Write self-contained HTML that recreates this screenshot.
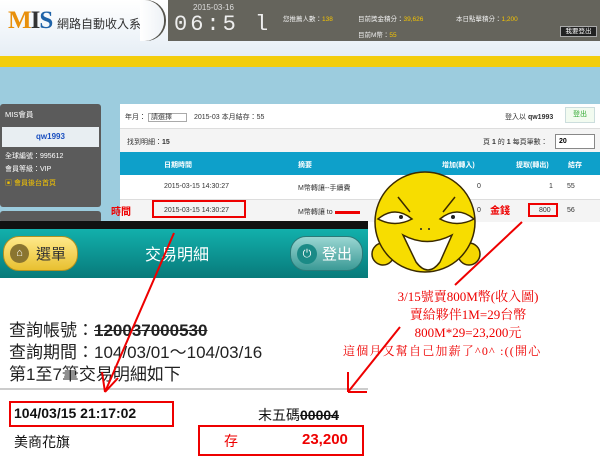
<!DOCTYPE html>
<html><head><meta charset="utf-8"><style>
*{margin:0;padding:0;box-sizing:border-box}
body{width:600px;height:459px;overflow:hidden;position:relative;background:#fff;font-family:"Liberation Sans","Noto Sans CJK TC",sans-serif}
.a{position:absolute}
.s{font-size:7px;color:#333;white-space:nowrap}
</style></head><body>
<div class="a" style="left:0;top:0;width:600px;height:56px;background:linear-gradient(#fff,#e6eef5)"></div>
<div class="a" style="left:8px;top:7px;font-family:'Liberation Serif',serif;font-size:25px;font-weight:bold;letter-spacing:-1px"><span style="color:#e8900c">M</span><span style="color:#333">I</span><span style="color:#1f63a8">S</span></div>
<div class="a" style="left:57px;top:15px;font-size:12px;color:#333;font-family:'Noto Sans CJK TC',sans-serif">網路自動收入系統</div>
<div class="a" style="left:168px;top:0;width:432px;height:41px;background:#65645c"></div>
<div class="a" style="left:140px;top:0;width:24px;height:41px;border-radius:0 20px 20px 0;background:linear-gradient(90deg,#fff,#eef2f6);box-shadow:2px 0 0 #55544d"></div>
<div class="a" style="left:193px;top:3px;font-size:8px;color:#ddd">2015-03-16</div>
<div class="a" style="left:174px;top:12px;font-size:22px;color:#eee;font-family:'Liberation Mono',monospace;letter-spacing:3px">06:5 l</div>
<div class="a" style="left:283px;top:13px;font-size:6.5px;color:#eee">您推薦人數：<span style="color:#f5c400">138</span></div>
<div class="a" style="left:358px;top:13px;font-size:6.5px;color:#eee">目前獎金積分：<span style="color:#f5c400">39,626</span></div>
<div class="a" style="left:456px;top:13px;font-size:6.5px;color:#eee">本日點擊積分：<span style="color:#f5c400">1,200</span></div>
<div class="a" style="left:358px;top:29px;font-size:6.5px;color:#eee">目前M幣：<span style="color:#f5c400">55</span></div>
<div class="a" style="left:560px;top:26px;width:37px;height:11px;background:#222;border:1px solid #aaa;color:#fff;font-size:6.5px;text-align:center;line-height:9px">我要登出</div>
<div class="a" style="left:0;top:56px;width:600px;height:11px;background:#f3cd0c"></div>
<div class="a" style="left:0;top:67px;width:600px;height:155px;background:#9cccde"></div>
<!-- sidebar -->
<div class="a" style="left:0;top:104px;width:101px;height:103px;background:#5b5b5b;border-radius:3px"></div>
<div class="a" style="left:5px;top:109px;font-size:7.5px;color:#fff">MIS會員</div>
<div class="a" style="left:2px;top:127px;width:97px;height:20px;background:#e8eef2;color:#1a4fc0;font-size:8px;font-weight:bold;text-align:center;line-height:20px">qw1993</div>
<div class="a" style="left:5px;top:151px;font-size:7px;color:#fff">全球編號：995612</div>
<div class="a" style="left:5px;top:164px;font-size:7px;color:#fff">會員等級：VIP</div>
<div class="a" style="left:5px;top:178px;font-size:7px;color:#f5c400">▣ 會員後台首頁</div>
<div class="a" style="left:0;top:211px;width:101px;height:12px;background:#5b5b5b;border-radius:3px"></div>
<!-- main -->
<div class="a" style="left:120px;top:104px;width:480px;height:118px;background:#fff"></div>
<div class="a s" style="left:125px;top:112px">年月： <span style="border:1px solid #aaa;padding:0 14px 0 2px">請選擇</span>　2015-03 本月結存：55</div>
<div class="a s" style="left:505px;top:112px">登入以 <b>qw1993</b></div>
<div class="a" style="left:565px;top:107px;width:30px;height:16px;border:1px solid #cdd;background:#f2fbf0;color:#3a3;font-size:7px;text-align:center;line-height:14px">登出</div>
<div class="a" style="left:120px;top:128px;width:480px;height:24px;background:#f4f4f4;border-top:1px solid #ddd"></div>
<div class="a s" style="left:127px;top:137px">找到明細：<b>15</b></div>
<div class="a s" style="left:483px;top:137px">頁 <b>1</b> 的 <b>1</b> 每頁筆數：</div>
<div class="a" style="left:555px;top:134px;width:40px;height:15px;border:1px solid #888;background:#fff;font-size:7px;font-weight:bold;padding:3px 3px">20</div>
<div class="a" style="left:120px;top:152px;width:480px;height:23px;background:#0ea0ca"></div>
<div class="a s" style="left:164px;top:160px;color:#fff;font-weight:bold">日期時間</div>
<div class="a s" style="left:298px;top:160px;color:#fff;font-weight:bold">摘要</div>
<div class="a s" style="left:442px;top:160px;color:#fff;font-weight:bold">增加(轉入)</div>
<div class="a s" style="left:516px;top:160px;color:#fff;font-weight:bold">提取(轉出)</div>
<div class="a s" style="left:568px;top:160px;color:#fff;font-weight:bold">結存</div>
<div class="a s" style="left:164px;top:183px">2015-03-15 14:30:27</div>
<div class="a s" style="left:298px;top:183px">M幣轉讓--手續費</div>
<div class="a s" style="left:477px;top:183px">0</div><div class="a s" style="left:549px;top:183px">1</div><div class="a s" style="left:567px;top:183px">55</div>
<div class="a" style="left:120px;top:199px;width:480px;height:23px;background:#f4f4f4;border-top:1px solid #ddd"></div>
<div class="a s" style="left:164px;top:207px">2015-03-15 14:30:27</div>
<div class="a s" style="left:298px;top:207px">M幣轉讓 to <span style="display:inline-block;width:25px;height:3px;background:#e00;vertical-align:middle"></span></div>
<div class="a s" style="left:477px;top:207px">0</div><div class="a s" style="left:539px;top:207px">800</div><div class="a s" style="left:567px;top:207px">56</div>
<div class="a" style="left:152px;top:200px;width:94px;height:18px;border:2px solid #e00"></div>
<div class="a" style="left:111px;top:203px;font-size:10px;color:#e00;font-weight:bold">時間</div>
<div class="a" style="left:528px;top:203px;width:30px;height:14px;border:2px solid #e00"></div>
<div class="a" style="left:490px;top:202px;font-size:10px;color:#e00;font-weight:bold">金錢</div>
<!-- phone -->
<div class="a" style="left:0;top:221px;width:368px;height:8px;background:#111"></div>
<div class="a" style="left:0;top:229px;width:368px;height:49px;background:linear-gradient(#12b0ac,#087a7a)"></div>
<div class="a" style="left:3px;top:236px;width:75px;height:35px;border-radius:16px;background:linear-gradient(#ffe98a,#e8c030);border:1px solid #b09020"></div>
<div class="a" style="left:10px;top:244px;width:19px;height:19px;border-radius:50%;background:#8a7530;color:#fff;font-size:11px;text-align:center;line-height:19px">⌂</div>
<div class="a" style="left:36px;top:243px;font-size:15px;color:#333">選單</div>
<div class="a" style="left:145px;top:241px;font-size:16px;color:#fff">交易明細</div>
<div class="a" style="left:290px;top:236px;width:73px;height:35px;border-radius:16px;background:linear-gradient(#9ad6d2,#3b9a96);border:1px solid #2a7a78"></div>
<div class="a" style="left:297px;top:244px;width:20px;height:20px;border-radius:50%;background:#1b8a86;color:#fff;font-size:11px;text-align:center;line-height:20px">⏻</div>
<div class="a" style="left:322px;top:243px;font-size:15px;color:#fff">登出</div>
<div class="a" style="left:0;top:278px;width:368px;height:181px;background:#fff"></div>
<div class="a" style="left:9px;top:316px;font-size:17px;color:#222;white-space:nowrap">查詢帳號：<s style="font-weight:bold">120037000530</s></div>
<div class="a" style="left:9px;top:338px;font-size:17px;color:#222;white-space:nowrap">查詢期間：104/03/01～104/03/16</div>
<div class="a" style="left:9px;top:360px;font-size:17px;color:#222;white-space:nowrap">第1至7筆交易明細如下</div>
<div class="a" style="left:0;top:388px;width:368px;height:2px;background:#ccc"></div>
<div class="a" style="left:9px;top:401px;width:165px;height:26px;border:2px solid #e00"></div>
<div class="a" style="left:14px;top:405px;font-size:14px;font-weight:bold;color:#111">104/03/15 21:17:02</div>
<div class="a" style="left:258px;top:405px;font-size:14px;color:#111">末五碼<s style="font-weight:bold">00004</s></div>
<div class="a" style="left:14px;top:432px;font-size:14px;color:#111">美商花旗</div>
<div class="a" style="left:198px;top:425px;width:166px;height:31px;border:2px solid #e00"></div>
<div class="a" style="left:224px;top:431px;font-size:14px;color:#e00">存</div>
<div class="a" style="left:302px;top:431px;font-size:15px;font-weight:bold;color:#e00">23,200</div>
<!-- notes -->
<div class="a" style="left:368px;top:288px;width:200px;text-align:center;font-family:'Liberation Serif','Noto Serif CJK SC',serif;font-size:13px;line-height:18px;color:#e00">3/15號賣800M幣(收入圖)<br>賣給夥伴1M=29台幣<br>800M*29=23,200元</div>
<div class="a" style="left:343px;top:342px;font-family:'Liberation Serif','Noto Serif CJK SC',serif;font-size:12px;color:#e00;white-space:nowrap;letter-spacing:1.2px">這個月又幫自己加薪了^0^ :((開心</div>
<!-- smiley + arrows -->
<svg class="a" style="left:0;top:0" width="600" height="459">
<g stroke="#3a2a00" stroke-width="1.5">
<circle cx="383" cy="254" r="11" fill="#f5d800"/><circle cx="469" cy="254" r="11" fill="#f5d800"/>
<circle cx="425" cy="222" r="50" fill="#f7dd00"/>
<circle cx="383" cy="254" r="11" fill="#f5d800" stroke="none" opacity="0"/>
<path d="M378 219 Q395 205 412 219 Q395 228 378 219Z" fill="#fff"/>
<path d="M440 219 Q457 205 474 219 Q457 228 440 219Z" fill="#fff"/>
<path d="M403 235 Q427 248 452 235 L440 262 Q428 278 416 262Z" fill="#fff"/>
<path d="M398 197 L410 212 M455 197 L443 212" fill="none"/>
</g>
<circle cx="401" cy="217" r="2" fill="#222"/><circle cx="453" cy="217" r="2" fill="#222"/>
<circle cx="421" cy="229" r="1" fill="#222"/><circle cx="429" cy="229" r="1" fill="#222"/>
<g stroke="#e00" stroke-width="2" fill="none">
<path d="M174 233 L105 392 M105 392 L102 372 M105 392 L118 378"/>
<path d="M522 222 L455 285"/>
<path d="M400 327 L348 392 M348 392 L348 372 M348 392 L367 392"/>
</g>
</svg>
</body></html>
